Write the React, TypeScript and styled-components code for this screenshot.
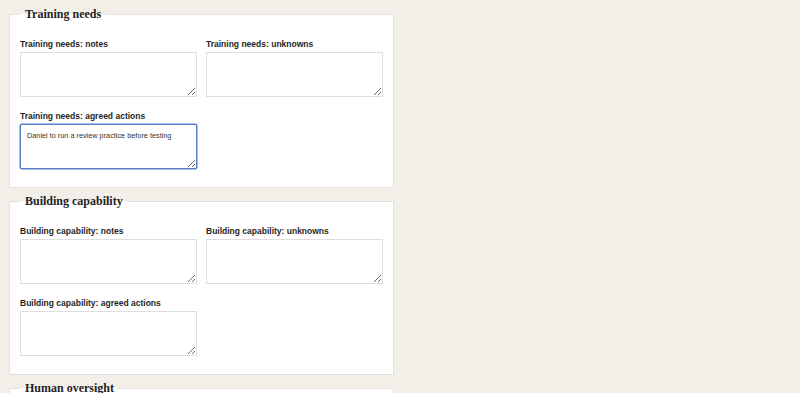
import * as React from 'react';
import styled, { createGlobalStyle } from 'styled-components';

const GlobalStyle = createGlobalStyle`
  html, body {
    margin: 0;
    padding: 0;
    background: #f2efe9;
  }
  body {
    font-family: "Liberation Sans", Arial, sans-serif;
    color: #1f1f1f;
  }
`;

const Page = styled.main`
  width: 385px;
  padding: 6px 0 0 9px;
`;

const Section = styled.fieldset`
  margin: 0 0 5px;
  padding: 17px 10px 18px;
  border: 1px solid #e4e1da;
  background: #ffffff;
  min-width: 0;
`;

const Legend = styled.legend`
  padding: 0 4px 0 5px;
  font-family: "Liberation Serif", Georgia, serif;
  font-weight: bold;
  font-size: 12px;
  line-height: 16px;
  color: #222;
`;

const Grid = styled.div`
  display: grid;
  grid-template-columns: 1fr 1fr;
  column-gap: 9px;
  row-gap: 14px;
`;

const Field = styled.label`
  display: flex;
  flex-direction: column;
`;

const FieldLabel = styled.span`
  font-size: 8.5px;
  line-height: 11px;
  font-weight: bold;
  color: #262626;
  margin-bottom: 2px;
`;

const TextArea = styled.textarea<{ $focused?: boolean }>`
  box-sizing: border-box;
  height: 45px;
  width: 100%;
  resize: vertical;
  padding: 6px 6px;
  font-family: "Liberation Sans", Arial, sans-serif;
  font-size: 7.3px;
  color: #333;
  background: #fff;
  border: 1px solid ${({ $focused }) => ($focused ? '#5a7ec8' : '#dedede')};
  border-radius: ${({ $focused }) => ($focused ? '2px' : '0')};
  box-shadow: ${({ $focused }) => ($focused ? '0 0 0 0.5px #5a7ec8' : 'none')};
  outline: none;
`;

interface ISection {
  title: string;
  value?: string;
}

const sections: ISection[] = [
  { title: 'Training needs', value: 'Daniel to run a review practice before testing' },
  { title: 'Building capability' },
  { title: 'Human oversight' },
];

const FormSection = ({ title, value }: ISection) => (
  <Section>
    <Legend>{title}</Legend>
    <Grid>
      <Field>
        <FieldLabel>{title}: notes</FieldLabel>
        <TextArea />
      </Field>
      <Field>
        <FieldLabel>{title}: unknowns</FieldLabel>
        <TextArea />
      </Field>
      <Field>
        <FieldLabel>{title}: agreed actions</FieldLabel>
        <TextArea $focused={!!value} defaultValue={value} />
      </Field>
    </Grid>
  </Section>
);

const App = () => (
  <>
    <GlobalStyle />
    <Page>
      {sections.map((s) => (
        <FormSection key={s.title} {...s} />
      ))}
    </Page>
  </>
);

export default App;
